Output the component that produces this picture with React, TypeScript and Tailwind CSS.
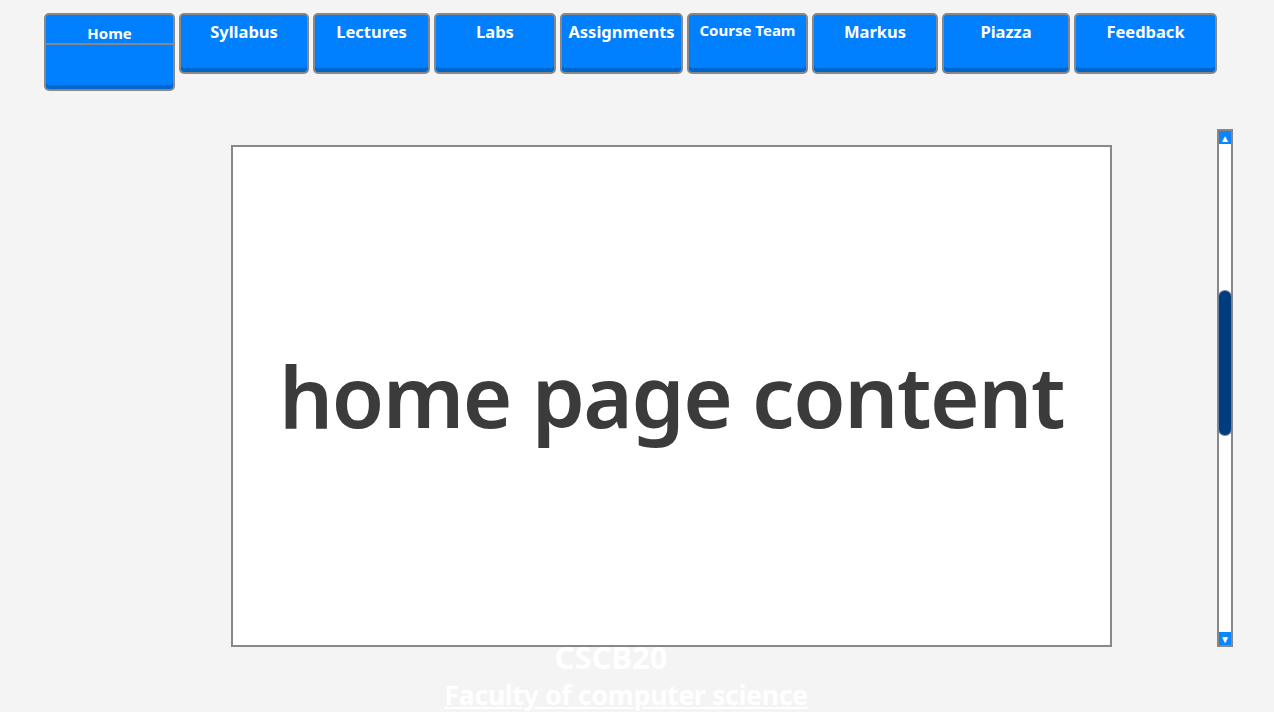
const tabs = [
  { label: 'Syllabus', w: 'w-[130px]' },
  { label: 'Lectures', w: 'w-[117px]' },
  { label: 'Labs', w: 'w-[122px]' },
  { label: 'Assignments', w: 'w-[123px]' },
  { label: 'Course Team', w: 'w-[121px]', small: true },
  { label: 'Markus', w: 'w-[126px]' },
  { label: 'Piazza', w: 'w-[128px]' },
  { label: 'Feedback', w: 'w-[143px]' },
]

export default function App() {
  return (
    <div className="min-h-screen bg-[#f4f4f4] font-['Noto_Sans',sans-serif] overflow-hidden">
      {/* nav */}
      <nav className="flex items-start gap-[4px] pl-[44px] pt-[13px]">
        <div className="w-[131px] h-[78px] flex flex-col border-2 border-[#888] rounded-[5px] bg-[#007fff] shadow-[inset_0_-4px_0_#0066cc] overflow-hidden">
          <div className="h-[28px] flex items-end justify-center pb-[1px] text-white font-bold text-[15px] leading-[18px]">Home</div>
          <div className="h-[2px] bg-[#888]" />
        </div>
        {tabs.map(t => (
          <div
            key={t.label}
            className={`${t.w} h-[61px] border-2 border-[#888] rounded-[5px] bg-[#007fff] shadow-[inset_0_-4px_0_#0066cc] text-white font-bold text-center pt-[6px] ${t.small ? 'text-[15px] leading-[18px]' : 'text-[16.5px] leading-[21px]'}`}
          >
            {t.label}
          </div>
        ))}
      </nav>

      {/* main row */}
      <div className="flex items-start mt-[38px]">
        <div className="ml-[231px] mt-[16px] w-[881px] h-[502px] border-2 border-[#888] bg-white flex items-center justify-center">
          <span className="text-[#3b3b3b] font-semibold text-[85px] leading-none tracking-[-1.5px] pb-[2px]">home page content</span>
        </div>
        <div className="ml-[105px] w-[16px] h-[518px] border-2 border-[#888] bg-white flex flex-col">
          <div className="h-[13px] bg-[#0a84ff] flex items-center justify-center text-white text-[10px] leading-none">▲</div>
          <div className="h-[147px]" />
          <div className="h-[144px] rounded-full bg-[#003d80] shadow-[0_0_0_1px_#6f7f99]" />
          <div className="flex-1" />
          <div className="h-[13px] bg-[#0a84ff] flex items-center justify-center text-white text-[10px] leading-none">▼</div>
        </div>
      </div>

      {/* footer */}
      <footer className="-mt-[9px] flex flex-col items-center text-white font-bold">
        <span className="pr-[52px] text-[31px] leading-[38px]">CSCB20</span>
        <a href="#" className="pr-[22px] text-[27px] leading-[38px] tracking-[-0.5px] underline">Faculty of computer science</a>
      </footer>
    </div>
  )
}
